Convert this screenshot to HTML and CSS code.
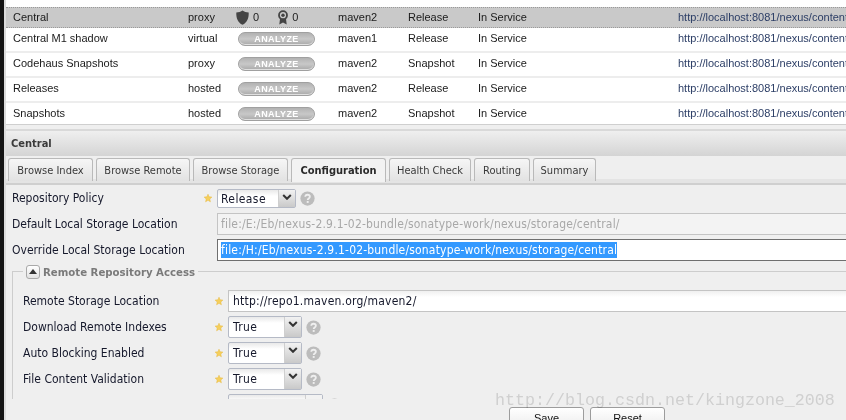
FILE: index.html
```html
<!DOCTYPE html>
<html lang="en">
<head>
<meta charset="utf-8">
<title>Central</title>
<link rel="stylesheet" href="styles.css">
</head>
<body>
<svg class="defs" width="0" height="0" aria-hidden="true">
  <symbol id="star" viewBox="0 0 10 10"><path d="M5 1.200 6.100 3.800 8.900 4.100 6.800 6 7.400 8.800 5 7.300 2.600 8.800 3.200 6 1.100 4.100 3.900 3.800Z" fill="#f5cf5c" stroke="#e6b840" stroke-width=".5"/></symbol>
  <symbol id="help" viewBox="0 0 16 16"><circle cx="8" cy="8" r="7.6" fill="#bcbcbc"/><path d="M5.6 6.200C5.700 4.700 6.700 4 8 4c1.500 0 2.500.9 2.500 2.100 0 1.900-2.300 1.800-2.300 3.500" fill="none" stroke="#efefef" stroke-width="1.900"/><rect x="7.200" y="10.700" width="2" height="2" fill="#efefef"/></symbol>
  <symbol id="chev" viewBox="0 0 10 6"><path d="M1.200 1 5 4.800 8.800 1" fill="none" stroke="#333" stroke-width="2"/></symbol>
</svg>
<div class="app">
  <div class="edge"></div>
  <main class="main">
    <section class="grid">
      <div class="row selected">
        <span>Central</span><span>proxy</span>
        <span class="health">
          <svg class="shield" viewBox="0 0 13 15"><path d="M6.500.5C8 1.800 10.500 2.500 12.700 2.500 12.900 8.500 11 12.600 6.500 14.800 2 12.600.1 8.500.3 2.500 2.500 2.500 5 1.800 6.500.5Z" fill="#444"/></svg>
          <span class="count">0</span>
          <svg class="ribbon" viewBox="0 0 12 15"><circle cx="6" cy="5.200" r="4" fill="none" stroke="#444" stroke-width="1.800"/><circle cx="6" cy="5.200" r="1.700" fill="#444"/><path d="M3 8.800 2.300 14.500 6 12.500 9.700 14.500 9 8.800Z" fill="#444"/></svg>
          <span class="count">0</span>
        </span>
        <span>maven2</span><span>Release</span><span>In Service</span>
        <span class="url">http://localhost:8081/nexus/content/repositories/central</span>
      </div>
      <div class="row">
        <span>Central M1 shadow</span><span>virtual</span><span class="health"><span class="pill">ANALYZE</span></span>
        <span>maven1</span><span>Release</span><span>In Service</span>
        <span class="url">http://localhost:8081/nexus/content/shadows/central-m1</span>
      </div>
      <div class="row">
        <span>Codehaus Snapshots</span><span>proxy</span><span class="health"><span class="pill">ANALYZE</span></span>
        <span>maven2</span><span>Snapshot</span><span>In Service</span>
        <span class="url">http://localhost:8081/nexus/content/repositories/codehaus</span>
      </div>
      <div class="row">
        <span>Releases</span><span>hosted</span><span class="health"><span class="pill">ANALYZE</span></span>
        <span>maven2</span><span>Release</span><span>In Service</span>
        <span class="url">http://localhost:8081/nexus/content/repositories/releases</span>
      </div>
      <div class="row last">
        <span>Snapshots</span><span>hosted</span><span class="health"><span class="pill">ANALYZE</span></span>
        <span>maven2</span><span>Snapshot</span><span>In Service</span>
        <span class="url">http://localhost:8081/nexus/content/repositories/snapshots</span>
      </div>
    </section>

    <div class="splitter"></div>
    <header class="panel-title">Central</header>
    <nav class="tabs">
      <span class="tab w85">Browse Index</span>
      <span class="tab w94">Browse Remote</span>
      <span class="tab w95">Browse Storage</span>
      <span class="tab w95 active">Configuration</span>
      <span class="tab w82">Health Check</span>
      <span class="tab w56">Routing</span>
      <span class="tab w63">Summary</span>
    </nav>

    <form class="form">
      <div class="field">
        <span class="label">Repository Policy</span>
        <svg class="star"><use href="#star"/></svg>
        <span class="select narrow"><span class="value">Release</span><span class="arrow"><svg><use href="#chev"/></svg></span></span>
        <svg class="help"><use href="#help"/></svg>
      </div>
      <div class="field">
        <span class="label">Default Local Storage Location</span>
        <span class="star"></span>
        <span class="input disabled">file:/E:/Eb/nexus-2.9.1-02-bundle/sonatype-work/nexus/storage/central/</span>
      </div>
      <div class="field">
        <span class="label">Override Local Storage Location</span>
        <span class="star"></span>
        <span class="input focus"><span class="sel">file:/H:/Eb/nexus-2.9.1-02-bundle/sonatype-work/nexus/storage/central</span></span>
      </div>

      <fieldset class="group">
        <div class="legend"><span class="toggle"></span><b>Remote Repository Access</b></div>
        <div class="field">
          <span class="label">Remote Storage Location</span>
          <svg class="star"><use href="#star"/></svg>
          <span class="input roomy">http://repo1.maven.org/maven2/</span>
        </div>
        <div class="field">
          <span class="label">Download Remote Indexes</span>
          <svg class="star"><use href="#star"/></svg>
          <span class="select"><span class="value">True</span><span class="arrow"><svg><use href="#chev"/></svg></span></span>
          <svg class="help"><use href="#help"/></svg>
        </div>
        <div class="field">
          <span class="label">Auto Blocking Enabled</span>
          <svg class="star"><use href="#star"/></svg>
          <span class="select"><span class="value">True</span><span class="arrow"><svg><use href="#chev"/></svg></span></span>
          <svg class="help"><use href="#help"/></svg>
        </div>
        <div class="field">
          <span class="label">File Content Validation</span>
          <svg class="star"><use href="#star"/></svg>
          <span class="select"><span class="value">True</span><span class="arrow"><svg><use href="#chev"/></svg></span></span>
          <svg class="help"><use href="#help"/></svg>
        </div>
        <div class="field">
          <span class="label"></span>
          <span class="star"></span>
          <span class="select wide"><span class="value"></span><span class="arrow plain"></span></span>
          <svg class="help"><use href="#help"/></svg>
        </div>
      </fieldset>
    </form>

    <footer class="buttons">
      <span class="button">Save</span>
      <span class="button">Reset</span>
    </footer>
    <div class="watermark">http://blog.csdn.net/kingzone_2008</div>
  </main>
</div>
</body>
</html>
```

FILE: styles.css
```css
* { box-sizing: border-box; }
html, body { margin: 0; height: 100%; overflow: hidden; }
body { font-family: "Liberation Sans", Arial, sans-serif; font-size: 11px; color: #1a1a1a; }
.defs { position: absolute; }

.app { display: flex; width: 846px; height: 420px; overflow: hidden; }
.edge { flex: 0 0 4px; background: #141414; }
.main { position: relative; flex: 1; min-width: 0; background: #efefef; border-left: 2px solid #dcdcdc; }

/* repository grid */
.grid { background: #fff; padding-top: 7px; border-bottom: 1px solid #cfcfcf; }
.row {
  display: grid;
  grid-template-columns: 175px 50px 100px 70px 70px 200px 1fr;
  align-items: center;
  height: 25px;
  padding: 0 0 3px 7px;
  border-bottom: 2px solid #ededed;
  white-space: nowrap;
}
.row.selected { height: 21px; padding-bottom: 1px; background: #c9c9c9; border: 1px dotted #9a9a9a; border-width: 1px 0; }
.row.last { height: 21px; padding-bottom: 1px; border-bottom: 0; }
.url { color: #2c3e66; overflow: hidden; }
.health { display: flex; align-items: center; }
.shield { width: 13px; height: 15px; margin-left: -2px; }
.ribbon { width: 12px; height: 15px; margin-left: 18px; }
.count { margin-left: 4px; color: #222; }
.ribbon + .count { margin-left: 3px; }
.pill {
  width: 77px; height: 14px; margin-top: 1px;
  border: 1px solid #a0a0a0; border-radius: 7px;
  background: linear-gradient(#b2b2b2, #c8c8c8 50%, #a8a8a8);
  box-shadow: inset 0 -1px 0 #e0e0e0;
  color: #fff; font-size: 9px; font-weight: bold; letter-spacing: .4px;
  line-height: 12px; text-align: center;
}

/* detail panel */
.splitter { height: 6px; border-bottom: 2px solid #d9d9d9; }
.panel-title {
  height: 25px; padding: 0 0 0 5px;
  background: linear-gradient(#efefef, #d4d4d4);
  font: bold 11px/26px "DejaVu Sans Condensed", "DejaVu Sans", sans-serif;
  color: #3b3b3b;
}
.tabs { display: flex; gap: 3px; height: 29px; padding: 2px 0 0 2px; border-bottom: 2px solid #cfcfcf; background: linear-gradient(#efefef 23px, #e4e4e4 23px); }
.tab {
  height: 23px;
  border: 1px solid #b9b9b9; border-bottom: 0; border-radius: 3px 3px 0 0;
  background: linear-gradient(#f6f6f6, #e2e2e2);
  font: 11px/23px "DejaVu Sans Condensed", "DejaVu Sans", sans-serif;
  color: #3a3a3a; text-align: center; white-space: nowrap;
}
.tab.active { height: 24px; background: #f2f2f2; font-weight: bold; color: #2a2a2a; }
.w85 { width: 85px; } .w94 { width: 94px; } .w95 { width: 95px; }
.w82 { width: 82px; } .w56 { width: 56px; } .w63 { width: 63px; }

.form { height: 214px; overflow: hidden; padding: 0 0 0 6px; font: 12px "DejaVu Sans Condensed", "DejaVu Sans", sans-serif; color: #15182b; }
.field { display: flex; align-items: center; height: 26px; }
.label { flex: 0 0 191px; white-space: nowrap; }
.star { flex: 0 0 10px; width: 10px; height: 10px; margin-right: 4px; }
.input {
  flex: 1; min-width: 0; height: 22px; padding-left: 3px;
  border: 1px solid #c4c4c4; border-right: 0;
  background: linear-gradient(#f0f0f0, #fff 6px);
  font-size: 12px; letter-spacing: .18px; line-height: 20px; white-space: nowrap; overflow: hidden;
}
.input.roomy { padding-left: 4px; letter-spacing: .22px; }
.input.disabled { background: #f3f3f3; color: #a8a8a8; }
.input.focus { border-color: #6f6f6f; background: #fff; }
.sel { display: inline-block; height: 16px; line-height: 16px; background: #3399ff; color: #fff; }
.select {
  display: flex; width: 74px; height: 22px;
  border: 1px solid #b5bac6; border-radius: 2px;
  background: linear-gradient(#e9e9e9, #fff 6px);
}
.select.narrow { width: 79px; height: 19px; }
.select.wide { width: 95px; }
.value { flex: 1; padding-left: 4px; line-height: 20px; font-size: 12px; letter-spacing: .4px; }
.narrow .value { padding-left: 3px; line-height: 18px; }
.arrow { flex: 0 0 17px; display: flex; justify-content: center; padding-top: 4px; background: linear-gradient(#f2f2f2, #c9c9c9); border-left: 1px solid #cfcfcf; }
.arrow svg { width: 10px; height: 6px; }
.arrow.plain { background: #f2f2f2; }
.help { flex: 0 0 15px; width: 15px; height: 15px; margin-left: 4px; }

.group { display: block; margin: 8px 0 0; padding: 0 0 0 10px; min-width: 0; border: 0; border-top: 1px solid #cdcdcd; border-left: 1px solid #cdcdcd; height: 140px; }
.legend { display: flex; align-items: center; gap: 3px; height: 16px; margin: -8px 0 8px 0; width: fit-content; padding: 0 3px; background: #efefef; color: #7a7a7a; }
.legend b { font-size: 11.300px; }
.toggle { position: relative; width: 14px; height: 14px; border: 1px solid #a9a9a9; border-radius: 3px; background: linear-gradient(#fff, #e2e2e2); }
.toggle::after { content: ""; position: absolute; left: 2px; top: 3px; border: 4px solid transparent; border-top: 0; border-bottom: 5px solid #333; }

.buttons { display: flex; gap: 6px; padding: 8px 0 0 503px; }
.button {
  width: 75px; height: 26px;
  border: 1px solid #9c9c9c; border-radius: 3px;
  background: linear-gradient(#fff, #e8e8e8);
  font-size: 11px; line-height: 20px; text-align: center; color: #111;
}
.watermark {
  position: absolute; left: 489px; top: 391px;
  font: 16.670px "Liberation Mono", monospace; color: #dedede; white-space: nowrap;
  mix-blend-mode: multiply;
}
```
